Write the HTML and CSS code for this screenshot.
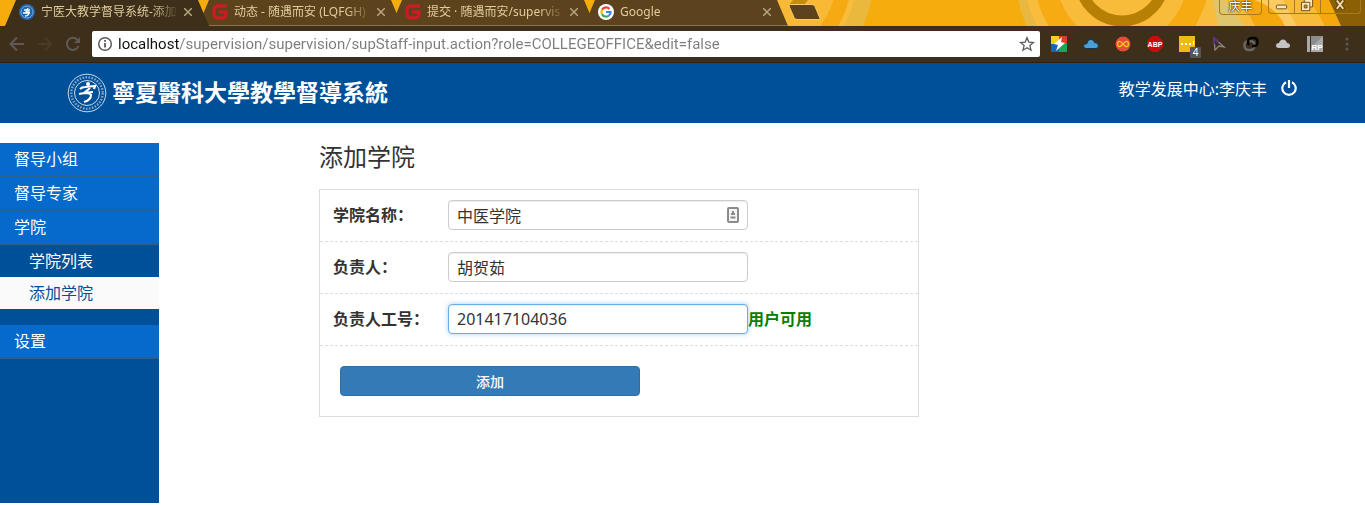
FILE: index.html
```html
<!DOCTYPE html>
<html lang="zh-CN">
<head>
    <meta charset="UTF-8">
    <meta name="viewport" content="width=device-width, initial-scale=1.0">
    <title>宁医大教学督导系统</title>
    <link rel="stylesheet" href="styles.css">
</head>
<body>
    <!-- browser tabs -->
    <div class="tab-strip">
        <svg class="theme" viewBox="0 0 1365 26" preserveAspectRatio="xMaxYMin slice" aria-hidden="true">
            <rect width="1365" height="26" fill="#f5ad0d"/>
            <circle cx="751" cy="-25" r="123" fill="#e9b83c"/>
            <circle cx="751" cy="-25" r="106" fill="#f8bd3c"/>
            <circle cx="751" cy="-25" r="101" fill="#f5a912"/>
            <circle cx="751" cy="-25" r="86" fill="#f8ba36"/>
            <path d="M793 0h15l-4 5h-15z" fill="#c48d10"/>
            <circle cx="1122" cy="-21" r="106" fill="#e9b840"/>
            <circle cx="1122" cy="-21" r="97" fill="#f8bd3c"/>
            <circle cx="1122" cy="-21" r="87" fill="#f7ab12"/>
            <circle cx="1122" cy="-21" r="65" fill="#f8bc3a"/>
            <circle cx="1122" cy="-21" r="42" fill="none" stroke="#b87f05" stroke-width="11"/>
            <path d="M1207 0h158v26H1196z" fill="#f8bd3c"/>
            <path d="M1213 0h12l20 26h-27z" fill="#dfc56c"/>
            <path d="M1232 0h23q22 8 30 26h-30q-8-18-23-26z" fill="#f5a80e"/>
            <path d="M1255 0h28l14 26h-12q-8-18-30-26z" fill="#fbcb62"/>
            <path d="M1283 0h46l10 26h-42z" fill="#f8bb3a"/>
            <path d="M1310 0h19l12 26h-16z" fill="#f5a80e"/>
            <path d="M1329 0h36v26h-24z" fill="#8a5f05"/>
        </svg>
        <ul class="tabs">
            <li class="tab active">
                <svg class="favicon" viewBox="0 0 16 16" aria-hidden="true">
                    <circle cx="8" cy="8" r="8" fill="#1d65ae"/>
                    <circle cx="8" cy="8" r="6" fill="none" stroke="#78a9da"/>
                    <path d="M5 6h6M9 4l-2 4h3q0 4-4 4M4 9h7" fill="none" stroke="#fff" stroke-width="1.3"/>
                </svg>
                <span class="tab-title">宁医大教学督导系统-添加</span>
                <button class="tab-close" aria-label="关闭"><svg viewBox="0 0 8 8"><path d="M0 0l8 8M8 0L0 8"/></svg></button>
            </li>
            <li class="tab">
                <svg class="favicon" viewBox="0 0 16 16" aria-hidden="true">
                    <path d="M15 2H6Q2 2 2 6v4q0 4 4 4h4q4 0 4-4V8H7" fill="none" stroke="#c71d23" stroke-width="3.4"/>
                </svg>
                <span class="tab-title">动态 - 随遇而安 (LQFGH)</span>
                <button class="tab-close" aria-label="关闭"><svg viewBox="0 0 8 8"><path d="M0 0l8 8M8 0L0 8"/></svg></button>
            </li>
            <li class="tab">
                <svg class="favicon" viewBox="0 0 16 16" aria-hidden="true">
                    <path d="M15 2H6Q2 2 2 6v4q0 4 4 4h4q4 0 4-4V8H7" fill="none" stroke="#c71d23" stroke-width="3.4"/>
                </svg>
                <span class="tab-title">提交 · 随遇而安/supervis</span>
                <button class="tab-close" aria-label="关闭"><svg viewBox="0 0 8 8"><path d="M0 0l8 8M8 0L0 8"/></svg></button>
            </li>
            <li class="tab">
                <svg class="favicon" viewBox="0 0 16 16" aria-hidden="true">
                    <circle cx="8" cy="8" r="8" fill="#fff"/>
                    <g fill="none" stroke-width="2.2">
                        <path d="M11.4 4.9A4.6 4.6 0 0 0 4 5.8" stroke="#ea4335"/>
                        <path d="M4 5.8a4.6 4.6 0 0 0 0 4.4" stroke="#fbbc05"/>
                        <path d="M4 10.2a4.6 4.6 0 0 0 7 1.3" stroke="#34a853"/>
                        <path d="M11 11.5A4.6 4.6 0 0 0 12.6 8H8" stroke="#4285f4"/>
                    </g>
                </svg>
                <span class="tab-title">Google</span>
                <button class="tab-close" aria-label="关闭"><svg viewBox="0 0 8 8"><path d="M0 0l8 8M8 0L0 8"/></svg></button>
            </li>
        </ul>
        <button class="new-tab" aria-label="新标签页">
            <svg viewBox="0 0 34 16"><path d="M3 .5h22q2 0 3 2l5 12q0 1-1 1H10q-2 0-3-2L2 2Q2 .5 3 .5z" fill="#5c421d" stroke="#fcca60"/></svg>
        </button>
        <div class="window-controls">
            <button class="profile">庆丰</button>
            <div class="window-buttons">
                <button aria-label="最小化"><svg viewBox="0 0 26 14"><rect x="7.5" y="5.5" width="11" height="4" rx="1" fill="#fbe6b8" stroke="#6b4d15"/></svg></button>
                <button aria-label="还原"><svg viewBox="0 0 26 14"><g fill="#fbe6b8" stroke="#6b4d15"><path d="M9.5 -1.5h9v9h-9z"/><path d="M6.5 2.5h9v9h-9z"/><path d="M9.5 5.500h3v3h-3z" fill="#d79a20"/></g></svg></button>
                <button class="wide" aria-label="关闭"><svg viewBox="0 0 41 14"><path d="M16 0l8 10M24 0l-8 10" stroke="#5b400c" stroke-width="4"/><path d="M16.5 .5l7 9M23.5 .5l-7 9" stroke="#f3dcae" stroke-width="2"/></svg></button>
            </div>
        </div>
    </div>

    <!-- address bar -->
    <div class="toolbar">
        <div class="nav-buttons">
            <button aria-label="后退"><svg viewBox="0 0 16 16" fill="none" stroke="#5f5a55" stroke-width="2"><path d="M15 8H2M8 1.500L1.500 8 8 14.500"/></svg></button>
            <button aria-label="前进"><svg viewBox="0 0 16 16" fill="none" stroke="#4b3b26" stroke-width="2"><path d="M1 8h13M8 1.500L14.500 8 8 14.500"/></svg></button>
            <button aria-label="刷新"><svg viewBox="0 0 16 16"><path d="M13.500 10A6 6 0 1 1 12.300 3.800" fill="none" stroke="#5f5a55" stroke-width="2"/><path d="M15 1v6H9z" fill="#5f5a55"/></svg></button>
        </div>
        <div class="omnibox">
            <svg viewBox="0 0 16 16" aria-hidden="true"><circle cx="8" cy="8" r="6.300" fill="none" stroke="#5a5a5a" stroke-width="1.500"/><path d="M8 7v4.500M8 4v1.800" stroke="#5a5a5a" stroke-width="1.800"/></svg>
            <input type="text" class="url" aria-label="地址" value="localhost/supervision/supervision/supStaff-input.action?role=COLLEGEOFFICE&amp;edit=false">
            <svg viewBox="0 0 16 16" aria-hidden="true"><path d="M8 1.800l1.800 4.300 4.700.4-3.600 3.100 1.100 4.600L8 11.800l-4 2.400 1.100-4.600-3.600-3.100 4.700-.4z" fill="none" stroke="#5a5a5a" stroke-width="1.300"/></svg>
        </div>
        <div class="extensions">
            <svg viewBox="0 0 16 16"><path d="M0 0h8v8H0z" fill="#f8cf18"/><path d="M8 0h8v8H8z" fill="#e23b2e"/><path d="M0 8h8v8H0z" fill="#1268b8"/><path d="M8 8h8v8H8z" fill="#1aa656"/><path d="M11 1L3 8l4 1-2 6 9-8-4-1z" fill="#fff"/></svg>
            <svg viewBox="0 0 16 16"><path d="M3 12.500Q.5 12.500.5 10T4 7.500Q5 3 8.500 3.500 11 4 11.500 6.500 15.500 6.500 15.500 10q0 2.500-3 2.500z" fill="#4a9fd6" stroke="#14334c"/></svg>
            <svg viewBox="0 0 16 16"><circle cx="8" cy="8" r="7.500" fill="#e64a38"/><path d="M8 8Q5.500 5 4 5.500 2.500 6 2.500 8T4 10.500Q5.500 11 8 8t4-2.500q1.500.5 1.500 2.500T12 10.500Q10.500 11 8 8z" fill="none" stroke="#f4c522" stroke-width="1.400"/></svg>
            <svg viewBox="0 0 16 16"><path d="M5 0h6l5 5v6l-5 5H5l-5-5V5z" fill="#c70d0d"/><text x="8" y="11" class="abp">ABP</text></svg>
            <div class="ext-badge">
                <svg viewBox="0 0 16 16"><path d="M0 0h16v16H0z" fill="#efbb12"/><path d="M2 7h2v2H2zM6 7h2v2H6zM10 7h2v2h-2zM14 5h1v4h-1z" fill="#fff"/></svg>
                <span class="badge">4</span>
            </div>
            <svg viewBox="0 0 16 16" fill="none"><path d="M4 14L3 2l10 9-5-1z" stroke="#8b8585" stroke-width="1.300"/><path d="M3.500 8L3 2l5 4" stroke="#5c2b85" stroke-width="1.500"/></svg>
            <svg viewBox="0 0 16 16" fill="none" stroke-width="2.500"><rect x="1.500" y="5" width="10" height="9" rx="4" stroke="#6b6762"/><path d="M6 9Q5 8 5 6.500 5 2 9 2h2q3.500 0 3.500 4T11 10H9" stroke="#050505"/></svg>
            <svg viewBox="0 0 16 16"><path d="M4 12Q1 12 1 9.500T4 7q1-3.500 4-3.500T12 7q3 0 3 2.500T12 12z" fill="#c4c4c4"/></svg>
            <svg viewBox="0 0 16 16"><path d="M0 0h3v16H0zM4 0h12v16H4z" fill="#a9a9a9"/><path d="M4 0h12L4 12z" fill="#8d8d8d"/><text x="10" y="14" class="rp">RP</text></svg>
            <svg viewBox="0 0 16 16" fill="#5f5a55"><circle cx="8" cy="3" r="1.500"/><circle cx="8" cy="8" r="1.500"/><circle cx="8" cy="13" r="1.500"/></svg>
        </div>
    </div>

    <header class="header">
        <div class="logo">
            <svg viewBox="0 0 40 40" aria-hidden="true">
                <g fill="none" stroke="#fff">
                    <circle cx="20" cy="20" r="18.800" stroke-width=".8"/>
                    <circle cx="20" cy="20" r="15.700" stroke-width="2.400" stroke-dasharray="1.600 1.400" opacity=".5"/>
                    <circle cx="20" cy="20" r="12.500" stroke-width=".8"/>
                    <path d="M13 16q2-2 5-2l10-1-1 3M23 15l-6 5M12 21q8-2 14-2M17 20q6 0 7 2 0 5-7 7" stroke-width="2.200"/>
                </g>
                <circle cx="21" cy="11" r="2" fill="#fff"/>
            </svg>
            <span class="logo-text">寧夏醫科大學教學督導系統</span>
        </div>
        <div class="user">
            <span>教学发展中心:李庆丰</span>
            <a href="#" aria-label="退出">
                <svg viewBox="0 0 16 16" fill="none" stroke="#fff" stroke-width="2.200"><path d="M5 2.200a6.700 6.700 0 1 0 6 0M8 0v8"/></svg>
            </a>
        </div>
    </header>

    <div class="container">
        <nav class="sidebar">
            <a href="#" class="menu">督导小组</a>
            <a href="#" class="menu">督导专家</a>
            <a href="#" class="menu">学院</a>
            <div class="submenu">
                <a href="#">学院列表</a>
                <a href="#" class="current">添加学院</a>
            </div>
            <a href="#" class="menu">设置</a>
        </nav>

        <main class="content">
            <h1>添加学院</h1>
            <form class="form-box">
                <div class="form-row">
                    <label for="name">学院名称：</label>
                    <div class="field">
                        <input type="text" id="name" value="中医学院">
                        <svg class="autofill" viewBox="0 0 12 16" aria-hidden="true"><rect x="1" y="1" width="10" height="14" rx="1" fill="#f4f4f4" stroke="#8c8c8c" stroke-width="2"/><path d="M5 4h2v2h1v2H4V6h1zM3.500 9.500h5v2h-5z" fill="#8c8c8c"/></svg>
                    </div>
                </div>
                <div class="form-row">
                    <label for="leader">负责人：</label>
                    <input type="text" id="leader" value="胡贺茹">
                </div>
                <div class="form-row">
                    <label for="staffId">负责人工号：</label>
                    <input type="text" id="staffId" class="focus" value="201417104036">
                    <span class="tip">用户可用</span>
                </div>
                <div class="form-submit">
                    <button type="button" class="btn">添加</button>
                </div>
            </form>
        </main>
    </div>
</body>
</html>
```
FILE: styles.css
```css
* {
    box-sizing: border-box;
}
body {
    margin: 0;
    font-family: "Noto Sans", "Noto Sans CJK SC", sans-serif;
    font-size: 16px;
    color: #333;
    background-color: #fff;
}
button, input {
    font-family: inherit;
}
button {
    border: none;
    background: none;
    padding: 0;
}
svg {
    display: block;
    flex: none;
}
a {
    text-decoration: none;
}

/* tabs */
.tab-strip {
    position: relative;
    display: flex;
    align-items: flex-start;
    height: 26px;
}
.theme {
    position: absolute;
    top: 0;
    left: 0;
    width: 100%;
    height: 26px;
}
.tabs {
    position: relative;
    display: flex;
    margin: 0;
    padding: 0 0 0 5px;
    list-style: none;
}
.tab {
    display: flex;
    align-items: center;
    width: 206px;
    height: 26px;
    margin-right: -13px;
    padding: 0 0 2px 14px;
    background-color: #5c421d;
    border-bottom: 1px solid #8a7350;
    clip-path: polygon(11px 0, 193px 0, 204px 100%, 0 100%);
}
.tab.active {
    z-index: 1;
    background-color: #3e2f1b;
    border-bottom-color: #3e2f1b;
}
.favicon {
    width: 16px;
    height: 16px;
}
.tab-title {
    width: 142px;
    margin-left: 6px;
    white-space: nowrap;
    font-size: 12px;
    line-height: 18px;
    color: #e0cd9c;
    -webkit-mask-image: linear-gradient(90deg, #000 112px, transparent 138px);
    mask-image: linear-gradient(90deg, #000 112px, transparent 138px);
}
.tab-close {
    margin-left: 1px;
}
.tab-close svg {
    width: 8px;
    height: 8px;
    fill: none;
    stroke: #b5a47c;
    stroke-width: 1.5;
}
.new-tab {
    position: relative;
    margin: 4px 0 0 10px;
}
.new-tab svg {
    width: 34px;
    height: 16px;
}
.window-controls {
    position: relative;
    display: flex;
    gap: 6px;
    margin-left: auto;
    padding-right: 4px;
}
.profile {
    width: 43px;
    height: 15px;
    border: 1px solid #a87a20;
    border-top: none;
    border-radius: 0 0 4px 4px;
    font-size: 12px;
    line-height: 14px;
    color: #fff;
    text-shadow: 0 0 2px #000, 0 0 1px #000;
}
.window-buttons {
    display: flex;
    height: 14px;
    border: 1px solid #a87a20;
    border-top: none;
    border-radius: 0 0 4px 4px;
}
.window-buttons button + button {
    border-left: 1px solid #a87a20;
}
.window-buttons svg {
    width: 25px;
    height: 13px;
}
.window-buttons .wide svg {
    width: 39px;
}

/* toolbar */
.toolbar {
    display: flex;
    align-items: center;
    height: 37px;
    padding: 0 10px 0 9px;
    background-color: #3e2f1b;
    border-bottom: 1px solid #2b2013;
}
.nav-buttons {
    display: flex;
    gap: 12px;
}
.nav-buttons svg {
    width: 16px;
    height: 16px;
}
.omnibox {
    display: flex;
    flex: 1;
    align-items: center;
    height: 26px;
    margin: 0 11px;
    padding: 0 5px;
    background-color: #fff;
    border-radius: 2px;
}
.omnibox svg {
    width: 16px;
    height: 16px;
}
.url {
    flex: 1;
    height: 24px;
    padding: 0 5px;
    border: none;
    outline: none;
    font-family: Roboto, sans-serif;
    font-size: 15px;
    /* host is black, the rest of the address grey */
    color: transparent;
    background: linear-gradient(90deg, #111 66px, #7c7c7c 66px);
    -webkit-background-clip: text;
    background-clip: text;
}
.extensions {
    display: flex;
    gap: 16px;
}
.extensions svg {
    width: 16px;
    height: 16px;
}
.abp {
    font: bold 7px "Liberation Sans", sans-serif;
    fill: #fff;
    text-anchor: middle;
}
.rp {
    font: bold 8px "Liberation Sans", sans-serif;
    fill: #fff;
    text-anchor: middle;
}
.ext-badge {
    position: relative;
}
.badge {
    position: absolute;
    top: 11px;
    left: 11px;
    width: 11px;
    background-color: #555;
    border-radius: 1px;
    font-size: 10px;
    line-height: 11px;
    text-align: center;
    color: #fff;
}

/* header */
.header {
    display: flex;
    align-items: center;
    justify-content: space-between;
    height: 60px;
    padding: 0 68px 0 67px;
    background-color: #004f99;
    color: #fff;
}
.logo {
    display: flex;
    align-items: center;
    gap: 5px;
}
.logo svg {
    width: 40px;
    height: 40px;
}
.logo-text {
    padding-bottom: 4px;
    font-family: "Noto Sans CJK TC", sans-serif;
    font-size: 23px;
    font-weight: bold;
    line-height: 30px;
}
.user {
    display: flex;
    align-items: center;
    gap: 14px;
    padding-bottom: 10px;
}
.user svg {
    width: 16px;
    height: 16px;
}

/* page */
.container {
    display: flex;
    margin-top: 20px;
}
.sidebar {
    width: 159px;
    min-height: 360px;
    background-color: #004f99;
}
.sidebar a {
    display: block;
    line-height: 32px;
    color: #fff;
}
.sidebar .menu {
    padding-left: 14px;
    background-color: #066acd;
    border-bottom: 2px solid #286090;
}
.submenu {
    margin-bottom: 16px;
}
.sidebar .submenu a {
    padding-left: 29px;
}
.sidebar .submenu .current {
    background-color: #fafafa;
    color: #004f99;
}
.content {
    flex: 1;
    padding-left: 160px;
}
h1 {
    margin: 0 0 18px;
    font-size: 24px;
    font-weight: normal;
    line-height: 28px;
}
.form-box {
    max-width: 600px;
    border: 1px solid #ddd;
}
.form-row {
    display: flex;
    align-items: center;
    padding: 10px 13px 11px;
    border-bottom: 1px dashed #ddd;
}
.form-row label {
    width: 115px;
    font-weight: bold;
    line-height: 24px;
}
.form-row input {
    display: block;
    width: 300px;
    height: 30px;
    padding: 0 8px;
    border: 1px solid #ccc;
    border-radius: 4px;
    outline: none;
    font-size: 16px;
    color: #333;
    box-shadow: inset 0 1px 1px rgba(0, 0, 0, 0.075);
}
.form-row .focus {
    border-color: #66afe9;
    box-shadow: inset 0 1px 1px rgba(0, 0, 0, 0.075), 0 0 5px rgba(102, 175, 233, 0.6);
}
.field {
    position: relative;
}
.autofill {
    position: absolute;
    top: 7px;
    right: 9px;
    width: 12px;
    height: 16px;
}
.tip {
    font-weight: bold;
    line-height: 24px;
    color: green;
}
.form-submit {
    padding: 20px;
}
.btn {
    display: block;
    width: 300px;
    height: 30px;
    border: 1px solid #2e6da4;
    border-radius: 4px;
    background-color: #337ab7;
    font-size: 14px;
    font-weight: 500;
    color: #fff;
}
```
